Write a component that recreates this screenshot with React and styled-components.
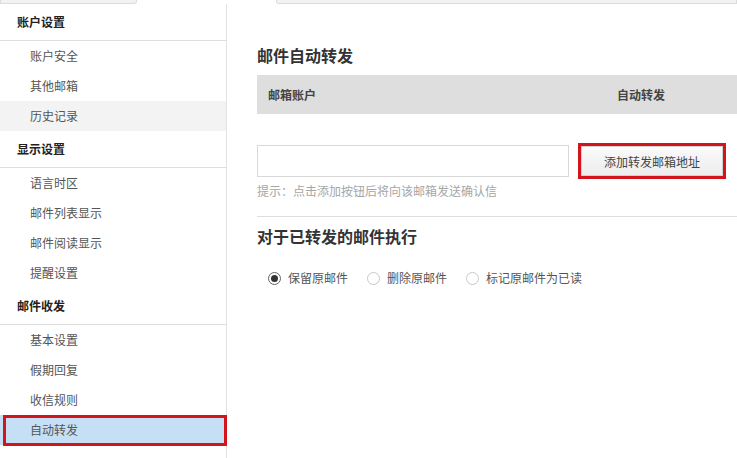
import React from "react";
import styled, { createGlobalStyle } from "styled-components";

const Global = createGlobalStyle`
  html, body { margin: 0; padding: 0; background: #fff; }
  body { font-family: "Noto Sans CJK SC", "Microsoft YaHei", sans-serif; font-size: 12px; color: #333; }
  * { box-sizing: border-box; }
`;

const Page = styled.div`
  width: 737px;
  height: 458px;
  overflow: hidden;
  display: flex;
  flex-direction: column;
`;

const TabStrip = styled.div`
  display: flex;
  height: 4px;
  flex: none;
`;

const TabPiece = styled.div`
  height: 4px;
  width: ${(p) => (p.$w ? `${p.$w}px` : "auto")};
  flex: ${(p) => (p.$w ? "none" : "1")};
  background: ${(p) => (p.$active ? "#fff" : "#f2f2f2")};
  border: ${(p) => (p.$active ? "none" : "1px solid #dcdcdc")};
  border-top: none;
  border-radius: ${(p) => p.$radius || "0"};
`;

const Body = styled.div`
  display: flex;
  flex: 1;
  min-height: 0;
`;

const Sidebar = styled.nav`
  width: 227px;
  flex: none;
  border-right: 1px solid #e2e2e2;
  display: flex;
  flex-direction: column;
`;

const GroupHeader = styled.div`
  height: 37px;
  line-height: 36px;
  padding-left: 17px;
  font-weight: bold;
  color: #222;
  border-bottom: 1px solid #dedede;
  font-size: 12px;
`;

const NavItem = styled.div`
  position: relative;
  height: 30px;
  line-height: 30px;
  padding-left: 30px;
  color: #555;
  font-size: 12px;
  background: ${(p) => (p.$selected ? "#c5e0f4" : p.$hover ? "#f3f3f3" : "transparent")};
  margin-right: ${(p) => (p.$selected ? "-1px" : "0")};
  ${(p) =>
    p.$selected &&
    `
    &::after {
      content: "";
      position: absolute;
      left: 3px;
      right: 0;
      top: 0;
      bottom: -1px;
      border: 3px solid #d3141b;
    }
  `}
`;

const Main = styled.main`
  flex: 1;
  padding: 40px 0 0 30px;
  display: flex;
  flex-direction: column;
`;

const SectionTitle = styled.h2`
  margin: 0;
  font-size: 16px;
  line-height: 22px;
  font-weight: bold;
  color: #333;
`;

const TableHead = styled.div`
  margin-top: 9px;
  height: 39px;
  background: #dedede;
  display: flex;
  align-items: center;
  font-weight: bold;
  color: #444;
  font-size: 12px;
`;

const HeadCell = styled.div`
  width: ${(p) => (p.$w ? `${p.$w}px` : "auto")};
  flex: ${(p) => (p.$w ? "none" : "1")};
  padding-left: ${(p) => p.$pl || 0}px;
`;

const AddRow = styled.div`
  margin-top: 29px;
  display: flex;
  align-items: center;
  gap: 9px;
`;

const AddressInput = styled.input`
  width: 312px;
  height: 32px;
  border: 1px solid #d8d8d8;
  outline: none;
  padding: 0 8px;
  font: inherit;
`;

const Highlight = styled.div`
  border: 3px solid #d3141b;
  padding: 0;
`;

const AddButton = styled.button`
  width: 142px;
  height: 30px;
  border: 1px solid #d0d0d0;
  background: linear-gradient(#fafafa, #ededed);
  font-family: inherit;
  font-size: 12px;
  color: #444;
  cursor: pointer;
`;

const Hint = styled.div`
  margin-top: 3px;
  line-height: 18px;
  color: #a6a6a6;
  font-size: 12px;
`;

const Divider = styled.hr`
  margin: 16px 0 0 0;
  border: none;
  border-top: 1px solid #dedede;
`;

const SecondTitle = styled(SectionTitle)`
  margin-top: 8px;
`;

const RadioGroup = styled.div`
  margin-top: 22px;
  padding-left: 11px;
  display: flex;
  gap: 19px;
`;

const RadioLabel = styled.label`
  display: flex;
  align-items: center;
  gap: 7px;
  color: #555;
  font-size: 12px;
  line-height: 18px;
`;

const RadioCircle = styled.span`
  width: 13px;
  height: 13px;
  border-radius: 50%;
  border: 1px solid ${(p) => (p.$checked ? "#666" : "#c8c8c8")};
  display: flex;
  align-items: center;
  justify-content: center;
  background: #fff;
  &::after {
    content: "";
    width: 7px;
    height: 7px;
    border-radius: 50%;
    background: ${(p) => (p.$checked ? "#333" : "transparent")};
  }
`;

const groups = [
  { title: "账户设置", items: ["账户安全", "其他邮箱", "历史记录"] },
  { title: "显示设置", items: ["语言时区", "邮件列表显示", "邮件阅读显示", "提醒设置"] },
  { title: "邮件收发", items: ["基本设置", "假期回复", "收信规则", "自动转发"] },
];

const options = ["保留原邮件", "删除原邮件", "标记原邮件为已读"];

export default function App() {
  return (
    <Page>
      <Global />
      <TabStrip>
        <TabPiece $w={137} $radius="0 0 3px 0" />
        <TabPiece $w={139} $active />
        <TabPiece $radius="0 0 0 3px" />
      </TabStrip>
      <Body>
        <Sidebar>
          {groups.map((g) => (
            <React.Fragment key={g.title}>
              <GroupHeader>{g.title}</GroupHeader>
              {g.items.map((it) => (
                <NavItem key={it} $hover={it === "历史记录"} $selected={it === "自动转发"}>
                  {it}
                </NavItem>
              ))}
            </React.Fragment>
          ))}
        </Sidebar>
        <Main>
          <SectionTitle>邮件自动转发</SectionTitle>
          <TableHead>
            <HeadCell $w={360} $pl={11}>邮箱账户</HeadCell>
            <HeadCell>自动转发</HeadCell>
          </TableHead>
          <AddRow>
            <AddressInput type="text" />
            <Highlight>
              <AddButton>添加转发邮箱地址</AddButton>
            </Highlight>
          </AddRow>
          <Hint>提示：点击添加按钮后将向该邮箱发送确认信</Hint>
          <Divider />
          <SecondTitle>对于已转发的邮件执行</SecondTitle>
          <RadioGroup>
            {options.map((o, i) => (
              <RadioLabel key={o}>
                <RadioCircle $checked={i === 0} />
                {o}
              </RadioLabel>
            ))}
          </RadioGroup>
        </Main>
      </Body>
    </Page>
  );
}
